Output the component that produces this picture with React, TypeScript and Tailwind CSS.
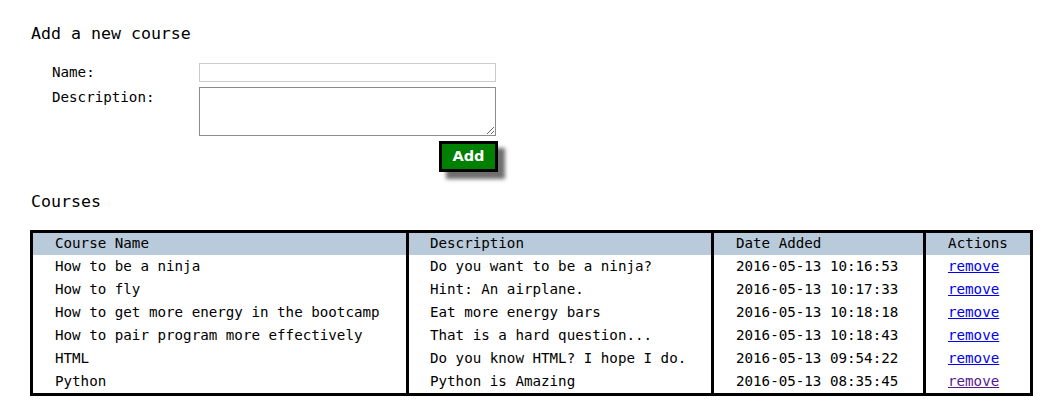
import React from 'react';

interface Course {
  name: string;
  description: string;
  added: string;
  visited?: boolean;
}

const courses: Course[] = [
  { name: 'How to be a ninja', description: 'Do you want to be a ninja?', added: '2016-05-13 10:16:53' },
  { name: 'How to fly', description: 'Hint: An airplane.', added: '2016-05-13 10:17:33' },
  { name: 'How to get more energy in the bootcamp', description: 'Eat more energy bars', added: '2016-05-13 10:18:18' },
  { name: 'How to pair program more effectively', description: 'That is a hard question...', added: '2016-05-13 10:18:43' },
  { name: 'HTML', description: 'Do you know HTML? I hope I do.', added: '2016-05-13 09:54:22' },
  { name: 'Python', description: 'Python is Amazing', added: '2016-05-13 08:35:45', visited: true },
];

const mono = "font-['DejaVu_Sans_Mono',monospace]";

const App: React.FC = () => {
  return (
    <div className={`${mono} text-[14.2px] text-black bg-white min-h-[409px] pl-[30px] pt-[24px]`}>
      <h3 className="text-[16.6px] leading-[20px] pl-px">Add a new course</h3>

      {/* form */}
      <form className="mt-[19px] pl-[22px] w-[467px]" onSubmit={e => e.preventDefault()}>
        <div className="flex items-center h-[19px]">
          <label className="w-[147px] leading-[19px]">Name:</label>
          <input
            type="text"
            className="w-[297px] h-[19px] border border-[#cbcbcb] bg-white outline-none"
          />
        </div>
        <div className="flex items-start mt-[5px]">
          <label className="w-[147px] leading-[19px] pt-px">Description:</label>
          <textarea className="w-[297px] h-[49px] border border-[#8c8c8c] bg-white outline-none resize" />
        </div>
        <div className="flex justify-end mt-[5px]">
          <button
            type="submit"
            className="w-[59px] h-[31px] border-[3px] border-black bg-[#008000] text-white font-bold text-[14.5px] font-['DejaVu_Sans',sans-serif] shadow-[7px_7px_4px_#6e6e6e] mr-[-1px]"
          >
            Add
          </button>
        </div>
      </form>

      <h3 className="text-[16.6px] leading-[20px] pl-px mt-[20px]">Courses</h3>

      {/* course list */}
      <table className={`${mono} text-[14.2px] text-black mt-[18px] w-[1003px] table-fixed border-separate border-spacing-0 border-[3px] border-black`}>
        <colgroup>
          <col className="w-[373px]" />
          <col className="w-[305px]" />
          <col className="w-[212px]" />
          <col className="w-[107px]" />
        </colgroup>
        <thead>
          <tr className="bg-[#b9cadb] h-[22px]">
            <th className="font-normal text-left pl-[22px] p-0">Course Name</th>
            <th className="font-normal text-left pl-[21px] p-0 border-l-[3px] border-black">Description</th>
            <th className="font-normal text-left pl-[22px] p-0 border-l-[3px] border-black">Date Added</th>
            <th className="font-normal text-center p-0 border-l-[3px] border-black">Actions</th>
          </tr>
        </thead>
        <tbody>
          {courses.map(course => (
            <tr key={course.name} className="h-[23px]">
              <td className="pl-[22px] p-0 whitespace-nowrap">{course.name}</td>
              <td className="pl-[21px] p-0 border-l-[3px] border-black whitespace-nowrap">{course.description}</td>
              <td className="pl-[22px] p-0 border-l-[3px] border-black whitespace-nowrap">{course.added}</td>
              <td className="text-left pl-[22px] p-0 border-l-[3px] border-black">
                <a
                  href="#"
                  className={`underline ${course.visited ? 'text-[#551a8b]' : 'text-[#0000ee]'}`}
                >
                  remove
                </a>
              </td>
            </tr>
          ))}
        </tbody>
      </table>
    </div>
  );
};

export default App;
